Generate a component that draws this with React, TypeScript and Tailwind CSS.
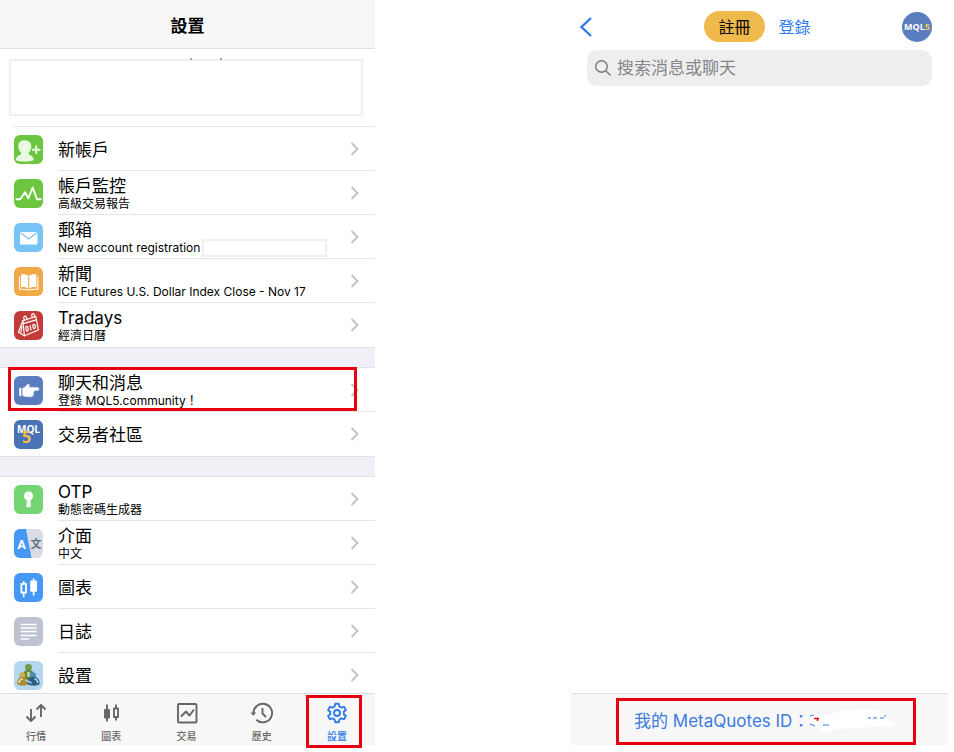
import React from "react";

type IconName =
  | "account"
  | "monitor"
  | "mail"
  | "news"
  | "tradays"
  | "chat"
  | "mql5"
  | "otp"
  | "language"
  | "charts"
  | "journal"
  | "settings";

interface SettingsItem {
  icon: IconName;
  title: string;
  subtitle?: string;
  masked?: boolean;
  highlighted?: boolean;
}

const groups: SettingsItem[][] = [
  [
    { icon: "account", title: "新帳戶" },
    { icon: "monitor", title: "帳戶監控", subtitle: "高級交易報告" },
    {
      icon: "mail",
      title: "郵箱",
      subtitle: "New account registration",
      masked: true,
    },
    {
      icon: "news",
      title: "新聞",
      subtitle: "ICE Futures U.S. Dollar Index Close - Nov 17",
    },
    { icon: "tradays", title: "Tradays", subtitle: "經濟日曆" },
  ],
  [
    {
      icon: "chat",
      title: "聊天和消息",
      subtitle: "登錄 MQL5.community！",
      highlighted: true,
    },
    { icon: "mql5", title: "交易者社區" },
  ],
  [
    { icon: "otp", title: "OTP", subtitle: "動態密碼生成器" },
    { icon: "language", title: "介面", subtitle: "中文" },
    { icon: "charts", title: "圖表" },
    { icon: "journal", title: "日誌" },
    { icon: "settings", title: "設置" },
  ],
];

const iconColors: Record<IconName, string> = {
  account: "bg-[#6cc63f]",
  monitor: "bg-[#6cc63f]",
  mail: "bg-[#77c3f6]",
  news: "bg-[#f1a846]",
  tradays: "bg-[#c23b38]",
  chat: "bg-[#5a7dc0]",
  mql5: "bg-[#4a73b5]",
  otp: "bg-[#74d572]",
  language: "bg-[#d9dce2]",
  charts: "bg-[#4698f7]",
  journal: "bg-[#bfc2d0]",
  settings: "bg-[#b4d6ee]",
};

const drawings: Record<IconName, React.ReactNode> = {
  account: (
    <>
      <path
        d="M10 5.2c-3.600 0-5.700 2.500-5.700 6 0 2.700 1.200 5 2.700 6.400v1.700c-2.200 1.200-4.600 2-5.200 5.700 2.500 2 13.700 2 18.200 0-.6-3.700-3-4.500-5.200-5.700v-1.700c1.500-1.400 2.500-3.700 2.500-6.400 0-3.500-2-6-7.300-6z"
        fill="#e9f9e2"
      />
      <path d="M18 14.7h8.400M22.200 10.500v8.400" stroke="#e9f9e2" strokeWidth="2" />
    </>
  ),
  monitor: (
    <path
      d="M2.500 20.300H6.200L11 13.300l3.300 6L18.700 8.500l4.300 11.800h3.700"
      fill="none"
      stroke="#fff"
      strokeWidth="1.9"
      strokeLinejoin="round"
      strokeLinecap="round"
    />
  ),
  mail: (
    <>
      <rect x="6" y="9" width="17.5" height="12.5" rx="1" fill="#fff" />
      <path
        d="M6.5 9.800l8.200 6.200 8.200-6.200"
        fill="none"
        stroke="#77c3f6"
        strokeWidth="1.1"
      />
    </>
  ),
  news: (
    <>
      <path
        d="M14.700 9C12.700 7.200 9.500 7 7 7.400v12.800c2.700-.3 5.700 0 7.700 1.600 2-1.600 5-1.900 7.700-1.600V7.400c-2.500-.4-5.700-.2-7.700 1.600z"
        fill="#fff"
      />
      <path
        d="M5.500 9.500v12.800c3.500-.4 6.200.2 9.200.7 3-.5 5.700-1.100 9.200-.7V9.500"
        fill="none"
        stroke="#fff"
        strokeWidth="1.1"
      />
      <path d="M14.700 9.500v12" stroke="#f1a846" strokeWidth="1.1" />
    </>
  ),
  tradays: (
    <g
      fill="none"
      stroke="#fff"
      strokeWidth="1.2"
      strokeLinejoin="round"
      strokeLinecap="round"
    >
      <path d="M8.800 9.700l13-4.200 2.600 13.500-14 5.800z" />
      <path d="M8.800 9.700L4.500 21.200l5.900 3.600M9.300 12.700l13-3.800M7.800 15.500L7 21" />
      <path d="M10.500 9.200c-2-3 .2-5 1.500-3.500s.8 2.500.3 3M18.500 6.700c-2-3 .2-5 1.500-3.500s.8 2.500.3 3" />
      <path d="M12 15.700c1.700-.9 2.200.8 2.300 2.500s-1.200 2.700-1.900 1-.8-2.600-.4-3.500zM16.200 14.500l.8 4.500M19 13.700c1.300-1 2.200.4 2.300 2s-1.200 2.700-1.900 1.200-.8-2.400-.4-3.200z" />
    </g>
  ),
  chat: (
    <g fill="#fff" stroke="#fff" strokeWidth=".5" strokeLinejoin="round">
      <rect x="5.5" y="12" width="1.6" height="8" rx=".4" />
      <path d="M8.700 12.200c2-.3 3.200-1.800 4.200-3.400.7-1.100 2.500-.8 2.500.6 0 .8-.2 1.400-.6 2h8.600c2.100 0 2.100 3 0 3h-4.200c1.100.3 1.100 2 0 2.200.8.6.5 2-.5 2.200.5.900 0 1.900-1.200 1.900h-4.500c-1.800 0-2.800-1-4.300-1.200z" />
    </g>
  ),
  mql5: (
    <>
      <text
        x="14.5"
        y="12.5"
        textAnchor="middle"
        fontSize="10"
        fontWeight="700"
        fill="#fff"
        fontFamily="Open Sans, sans-serif"
      >
        MQL
      </text>
      <text
        x="12.7"
        y="23"
        textAnchor="middle"
        fontSize="16"
        fontWeight="700"
        fill="#f6bd45"
        fontFamily="Open Sans, sans-serif"
      >
        5
      </text>
    </>
  ),
  otp: (
    <>
      <circle cx="14.5" cy="11" r="4.600" fill="#fff" />
      <path d="M13 13h3.400l.4 9.200h-4.400z" fill="#fff" />
      <circle cx="14.5" cy="11" r="1.1" fill="#c9f0c8" />
    </>
  ),
  language: (
    <>
      <path d="M0 0h12l5.500 29H0z" fill="#4698f7" />
      <text
        x="7.5"
        y="19.5"
        textAnchor="middle"
        fontSize="13"
        fontWeight="700"
        fill="#fff"
        fontFamily="Roboto, sans-serif"
      >
        A
      </text>
      <text
        x="22"
        y="18.5"
        textAnchor="middle"
        fontSize="11"
        fontWeight="700"
        fill="#5f7480"
        fontFamily="Noto Sans CJK TC, sans-serif"
      >
        文
      </text>
    </>
  ),
  charts: (
    <>
      <path
        d="M9.700 8v3M9.700 20v4.200M19.600 5.500v17"
        stroke="#fff"
        strokeWidth="1.7"
      />
      <rect
        x="7.400"
        y="11"
        width="4.600"
        height="8.600"
        fill="none"
        stroke="#fff"
        strokeWidth="1.8"
      />
      <rect x="16.2" y="7.5" width="6.8" height="11.2" rx=".6" fill="#fff" />
    </>
  ),
  journal: (
    <path
      d="M6.700 7.500h16M6.700 11h16M6.700 14.500h16M6.700 18.500h16M6.700 22h8.500"
      stroke="#fff"
      strokeWidth="1.3"
    />
  ),
  settings: (
    <>
      <circle cx="14.5" cy="6.5" r="3.4" fill="#6f9c4a" />
      <path
        d="M7.500 18c.5-6 3-9 7-9s6.500 3 7 9c-3 2.500-11 2.500-14 0z"
        fill="#547f3b"
      />
      <path d="M12.500 10c1 1.500 3 1.500 4 0l-.8 6h-2.500z" fill="#b9d192" />
      <circle cx="8.300" cy="14.300" r="3" fill="#cfb04a" />
      <path
        d="M3 23c0-4.700 2-7.300 5.700-7.300s6 3 6 7.300c-3 2.200-8.700 2.200-11.700 0z"
        fill="#a98c3a"
      />
      <path
        d="M4.800 22c.6-2.500 2-4 4.200-4"
        stroke="#f3e59a"
        fill="none"
        strokeWidth="1.6"
      />
      <circle cx="19" cy="14.300" r="3" fill="#4d8fbd" />
      <path
        d="M13.500 23c0-4.700 2-7.300 6-7.300s6.200 3 6.200 7.300c-3 2.200-9.200 2.200-12.200 0z"
        fill="#2c5f80"
      />
      <path
        d="M20.500 17.800c2 .5 3 2 3.500 4.200M11.500 19l6 3"
        stroke="#a9d3ea"
        fill="none"
        strokeWidth="1.5"
      />
    </>
  ),
};

const tabs = [
  {
    label: "行情",
    icon: (
      <path d="M7 8v12M2.500 15.500L7 20l4.500-4.500M17 16V4M12.500 8.500L17 4l4.500 4.500" />
    ),
  },
  {
    label: "圖表",
    icon: (
      <>
        <path d="M8 3.500v17M17 3.500V7M17 16v3.500" />
        <rect x="6" y="9" width="4" height="7.5" fill="currentColor" />
        <rect x="15" y="7.5" width="4" height="8.5" />
      </>
    ),
  },
  {
    label: "交易",
    icon: (
      <>
        <rect x="3" y="3" width="18.5" height="18.5" rx="1" />
        <path d="M6 15.500l5-5 3.500 4L19 8.500" />
      </>
    ),
  },
  {
    label: "歷史",
    icon: (
      <>
        <path d="M3.500 12.500a9.300 9.300 0 1 1 2.800 6.200" />
        <path
          d="M.5 11.500h5.700l-2.800 3.200z"
          fill="currentColor"
          stroke="none"
        />
        <path d="M12.500 7v5.500l3.500 3.500" />
      </>
    ),
  },
  {
    label: "設置",
    active: true,
    icon: (
      <>
        <path d="M10.300 2.800h3.400l.7 2.700 1.900 1.100 2.700-.8 1.900 3.200-2.100 1.800v2.400l2.100 1.800-1.900 3.200-2.700-.8-1.900 1.100-.7 2.700h-3.400l-.7-2.700-1.900-1.100-2.700.8-1.900-3.200 2.100-1.800v-2.400l-2.100-1.800 1.900-3.200 2.700.8 1.900-1.100z" />
        <circle cx="12" cy="12" r="3" />
      </>
    ),
  },
];

const SettingsRow: React.FC<{ item: SettingsItem; last: boolean }> = ({
  item,
  last,
}) => (
  <li className="relative h-11">
    <a href="#" className="flex h-full items-center pl-3.5">
      <svg
        viewBox="0 0 29 29"
        className={`size-[29px] shrink-0 rounded-md ${iconColors[item.icon]}`}
        aria-hidden="true"
      >
        {drawings[item.icon]}
      </svg>
      <div
        className={`ml-[15px] flex h-full min-w-0 flex-1 items-center justify-between border-b pr-4 ${
          last ? "border-transparent" : "border-[#e6e6e8]"
        }`}
      >
        <div className="min-w-0 pt-[3px]">
          <div className="text-[17px] leading-[19px]">{item.title}</div>
          {item.subtitle && (
            <div className="flex items-center text-xs leading-[15px] whitespace-nowrap">
              {item.subtitle}
              {item.masked && (
                <span className="-my-1 ml-0.5 h-[18px] w-[125px] border-2 border-[#f0f0f0] bg-white" />
              )}
            </div>
          )}
        </div>
        <svg
          viewBox="0 0 9 14"
          className="h-3.5 w-[9px] shrink-0"
          fill="none"
          stroke="#c2c2c5"
          strokeWidth="1.8"
          aria-hidden="true"
        >
          <path d="M1.500 1l6 6-6 6" />
        </svg>
      </div>
    </a>
    {item.highlighted && (
      <div className="pointer-events-none absolute -top-px right-[18px] bottom-px left-2 border-3 border-[#e60012]" />
    )}
  </li>
);

const SettingsScreen = () => (
  <section className="flex min-h-0 flex-col">
    <header className="flex h-[49px] shrink-0 items-center justify-center border-b border-[#dedede] bg-[#f7f7f7] pt-1">
      <h1 className="text-[17px] leading-6 font-bold">設置</h1>
    </header>

    <div className="min-h-0 flex-1 overflow-hidden">
      <div className="pt-2.5 pr-3 pb-2.5 pl-[9px]">
        <div className="relative h-[57px] border-2 border-[#f0f0f0]">
          <svg
            viewBox="0 0 34 2"
            className="absolute -top-[3px] left-[178px] h-0.5 w-[34px]"
            aria-hidden="true"
          >
            <path d="M1 1h2M31 1h2" stroke="#555" strokeWidth="1" />
          </svg>
        </div>
      </div>
      <div className="ml-3.5 h-px bg-[#e6e6e8]" />
      {groups.map((group, index) => (
        <React.Fragment key={index}>
          {index > 0 && (
            <div className="h-[21px] border-y border-[#e3e3e6] bg-[#f0eff5]" />
          )}
          <ul>
            {group.map((item, i) => (
              <SettingsRow
                key={item.icon}
                item={item}
                last={i === group.length - 1}
              />
            ))}
          </ul>
        </React.Fragment>
      ))}
    </div>

    <nav className="flex h-[52px] shrink-0 justify-between border-t border-[#dedede] bg-[#f7f7f7] pr-[26px] pl-6">
      {tabs.map((tab) => (
        <a
          key={tab.label}
          href="#"
          className={`relative flex w-6 flex-col items-center pt-[7px] ${
            tab.active ? "text-[#2f7bea]" : "text-[#666]"
          }`}
        >
          <svg
            viewBox="0 0 24 24"
            className="size-6"
            fill="none"
            stroke="currentColor"
            strokeWidth="1.9"
            strokeLinejoin="round"
            aria-hidden="true"
          >
            {tab.icon}
          </svg>
          <span className="mt-[3px] text-[10px] leading-4 font-medium whitespace-nowrap">
            {tab.label}
          </span>
          {tab.active && (
            <div className="pointer-events-none absolute top-px -bottom-[3px] -left-[19px] w-14 border-3 border-[#e60012]" />
          )}
        </a>
      ))}
    </nav>
  </section>
);

const ChatScreen = () => (
  <section className="flex min-h-0 flex-col">
    <header className="grid shrink-0 grid-cols-[1fr_auto_1fr] items-center pt-[11px] pr-4 pl-2">
      <button type="button" aria-label="返回" className="w-4">
        <svg
          viewBox="0 0 16 20"
          className="h-5 w-4"
          fill="none"
          stroke="#2f7bea"
          strokeWidth="2.4"
        >
          <path d="M12 1L2.500 10l9.500 9" />
        </svg>
      </button>
      <div className="flex items-center gap-3.5 pl-1">
        <button
          type="button"
          className="h-[31px] rounded-full bg-[#efb94b] px-3.5 text-base"
        >
          註冊
        </button>
        <a href="#" className="text-base text-[#2f7bea]">
          登錄
        </a>
      </div>
      <div className="flex size-[30px] items-center justify-center justify-self-end rounded-full bg-[#5a7dc0] font-['Open_Sans',sans-serif] text-[9px] font-bold text-white">
        MQL<span className="text-[#efc94b]">5</span>
      </div>
    </header>

    <label className="mx-4 mt-2 flex h-9 shrink-0 items-center gap-1.5 rounded-[10px] bg-[#eee] px-2">
      <svg
        viewBox="0 0 16 16"
        className="size-4"
        fill="none"
        stroke="#77777c"
        strokeWidth="1.4"
        aria-hidden="true"
      >
        <circle cx="6.5" cy="6.5" r="5.8" />
        <path d="M10.800 10.800l4.700 4.700" />
      </svg>
      <input
        type="search"
        aria-label="搜索消息或聊天"
        placeholder="搜索消息或聊天"
        className="min-w-0 flex-1 bg-transparent pt-0.5 text-[17px] outline-none placeholder:text-[#85858a]"
      />
    </label>

    <footer className="relative mt-auto flex h-[52px] shrink-0 items-center border-t border-[#dedede] bg-[#f7f7f7] pt-1 pl-[63px]">
      <a href="#" className="text-[17px] whitespace-nowrap text-[#3a7be0]">
        我的 MetaQuotes ID：
      </a>
      <svg
        viewBox="0 0 100 28"
        className="-ml-1 h-7 w-[100px] shrink-0"
        aria-hidden="true"
      >
        <path
          d="M0 12l8-6 15 1 16-5 27-1 12 4 6 8 12 5-24 1-43 2-3 5-10-3-9-6z"
          fill="#fff"
        />
        <path
          d="M5 8l4-1M5 16l5 2M18 17h6M63 10h3M68 10h4M75 10h4M80 7v2"
          stroke="#3a7be0"
          strokeWidth="1"
          fill="none"
        />
        <path d="M9 10.500h5M12.500 10v3" stroke="#e60012" strokeWidth="1.5" />
      </svg>
      <div className="pointer-events-none absolute top-1 right-8 bottom-0 left-[45px] border-3 border-[#e60012]" />
    </footer>
  </section>
);

const App = () => {
  return (
    <main className="grid h-screen grid-cols-[375fr_377fr] gap-x-[196px] bg-white pr-1.5 pb-[7px] font-[Inter,'Noto_Sans_CJK_TC',sans-serif] text-black">
      <SettingsScreen />
      <ChatScreen />
    </main>
  );
};

export default App;
